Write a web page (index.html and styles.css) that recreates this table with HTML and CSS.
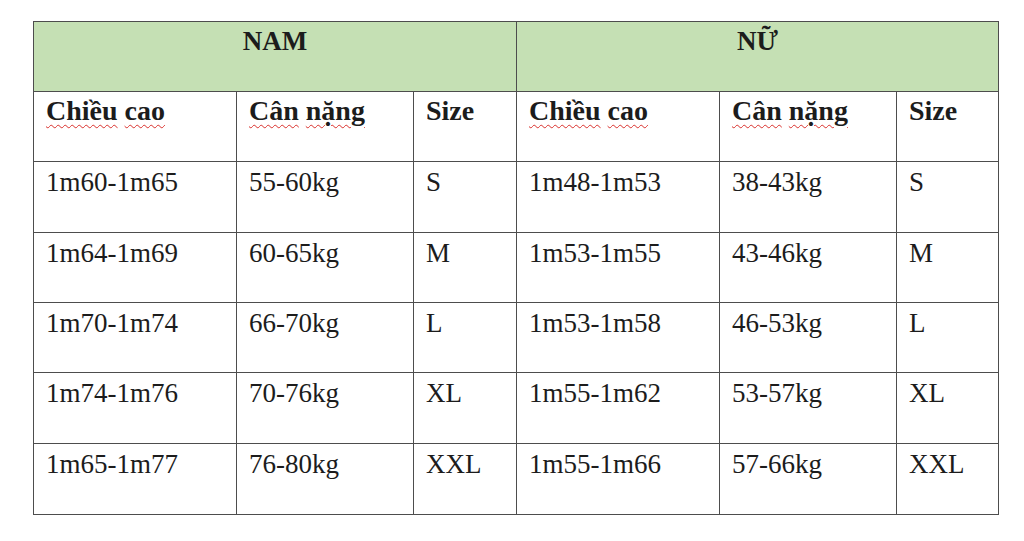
FILE: index.html
```html
<!DOCTYPE html>
<html lang="vi">
<head>
<meta charset="utf-8">
<title>Bảng size</title>
<link rel="stylesheet" href="styles.css">
</head>
<body>
<div class="page">
  <div class="table">
    <div class="cell group span3">NAM</div>
    <div class="cell group span3">NỮ</div>

    <div class="cell head"><span class="sp">Chiều</span> <span class="sp">cao</span></div>
    <div class="cell head"><span class="sp">Cân</span> <span class="sp">nặng</span></div>
    <div class="cell head">Size</div>
    <div class="cell head"><span class="sp">Chiều</span> <span class="sp">cao</span></div>
    <div class="cell head"><span class="sp">Cân</span> <span class="sp">nặng</span></div>
    <div class="cell head">Size</div>

    <div class="cell">1m60-1m65</div><div class="cell">55-60kg</div><div class="cell">S</div>
    <div class="cell">1m48-1m53</div><div class="cell">38-43kg</div><div class="cell">S</div>

    <div class="cell">1m64-1m69</div><div class="cell">60-65kg</div><div class="cell">M</div>
    <div class="cell">1m53-1m55</div><div class="cell">43-46kg</div><div class="cell">M</div>

    <div class="cell">1m70-1m74</div><div class="cell">66-70kg</div><div class="cell">L</div>
    <div class="cell">1m53-1m58</div><div class="cell">46-53kg</div><div class="cell">L</div>

    <div class="cell">1m74-1m76</div><div class="cell">70-76kg</div><div class="cell">XL</div>
    <div class="cell">1m55-1m62</div><div class="cell">53-57kg</div><div class="cell">XL</div>

    <div class="cell">1m65-1m77</div><div class="cell">76-80kg</div><div class="cell">XXL</div>
    <div class="cell">1m55-1m66</div><div class="cell">57-66kg</div><div class="cell">XXL</div>
  </div>
</div>
</body>
</html>
```

FILE: styles.css
```css
html, body {
  margin: 0;
  padding: 0;
  background: #ffffff;
}

.page {
  padding: 21px 0 0 33px;
}

.table {
  display: grid;
  grid-template-columns: 202px 176px 102px 202px 176px 101px;
  grid-template-rows: 69px 69px 70px 69px 69px 70px 70px;
  gap: 1px;
  padding: 1px;
  width: max-content;
  background: #4d4d4d;
  font-family: "Liberation Serif", "Times New Roman", serif;
  color: #1c1c1c;
}

.cell {
  background: #ffffff;
  font-size: 27px;
  line-height: 31px;
  padding: 5px 0 0 12px;
  white-space: nowrap;
}

.span3 {
  grid-column: span 3;
}

.group {
  background: #c5e0b4;
  font-weight: bold;
  text-align: center;
  padding: 4px 0 0 0;
}

.head {
  font-weight: bold;
  font-size: 28px;
  padding: 3px 0 0 12px;
}

.sp {
  text-decoration: underline wavy #d9302c;
  text-decoration-thickness: 1px;
  text-underline-offset: 4px;
}
```
